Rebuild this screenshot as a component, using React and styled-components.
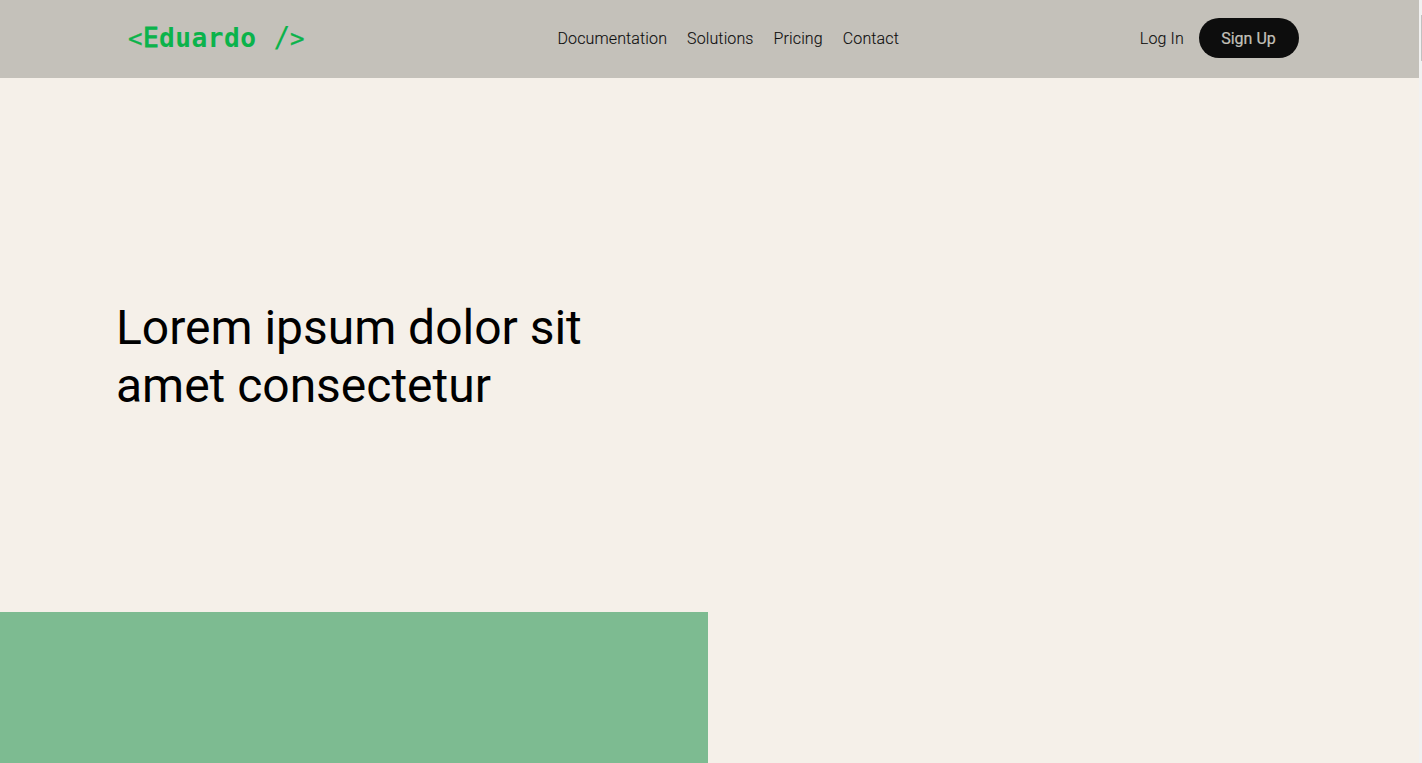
import React from "react";
import styled, { createGlobalStyle } from "styled-components";

const GlobalStyle = createGlobalStyle`
  * { box-sizing: border-box; }
  body { margin: 0; background: #f5f0e9; font-family: Roboto, sans-serif; overflow: hidden; }
  a { color: inherit; text-decoration: none; }
`;

const Shell = styled.div`
  display: grid;
  grid-template-columns: 1fr 3px;
  height: 100vh;
`;

const Page = styled.div`
  display: grid;
  grid-template-rows: 78px 534px 1fr;
  min-width: 0;
`;

const Header = styled.header`
  display: flex;
  justify-content: space-between;
  align-items: center;
  padding: 0 120px 2px 127px;
  background: #c4c1ba;
`;

const Logo = styled.a`
  display: flex;
  align-items: baseline;
  flex: 0 0 430.5px;
  color: #0bb34b;
  font: 400 26px/36px "DejaVu Sans Mono", monospace;
  letter-spacing: 0.45px;
  white-space: pre;
`;

const LogoBracket = styled.span`
  width: 16px;
  padding-left: 1px;
  font-size: 24px;
  -webkit-text-stroke: 0.3px #0bb34b;
`;

const LogoSlash = styled.span`
  margin-left: 17px;
  font-size: 28px;
  letter-spacing: -1.3px;
`;

const LogoInitial = styled.span`
  -webkit-text-stroke: 0.9px #0bb34b;
`;

const LogoName = styled.span`
  font-size: 26.2px;
  font-weight: 700;
`;

const Nav = styled.nav`
  display: flex;
  flex: 1;
  gap: 20px;
`;

const NavLink = styled.a`
  padding-top: 2px;
  color: #0d0d0d;
  font-size: 16px;
  font-weight: 300;
  line-height: 24px;
  letter-spacing: 0.12px;
  -webkit-text-stroke: 0.1px #0d0d0d;
`;

const Actions = styled.div`
  display: flex;
  align-items: center;
  gap: 15.2px;
`;

const SignUp = styled.button`
  width: 100px;
  height: 40px;
  padding: 2px 1px 0 0;
  border: 0;
  border-radius: 20px;
  background: #0d0d0d;
  color: #c4c1ba;
  font: 400 16px/24px Roboto, sans-serif;
  -webkit-text-stroke: 0.2px #c4c1ba;
`;

const Hero = styled.section`
  display: flex;
  align-items: center;
  padding: 24px 0 0 116px;
`;

const Title = styled.h1`
  width: 500px;
  margin: 0;
  color: #000;
  font-size: 48px;
  font-weight: 400;
  line-height: 58px;
  letter-spacing: -0.02px;
`;

const Feature = styled.section`
  width: 708px;
  background: #7dbb91;
`;

const Track = styled.aside`
  display: flex;
  justify-content: flex-end;
  padding-top: 15px;
  background: #f1f1f1;
`;

const Thumb = styled.div`
  width: 1px;
  height: 46px;
  background: #c1c1c1;
`;

const links = ["Documentation", "Solutions", "Pricing", "Contact"];

export default function App() {
  return (
    <Shell>
      <GlobalStyle />
      <Page>
        <Header>
          <Logo href="#">
            <LogoBracket>{"<"}</LogoBracket>
            <LogoInitial>E</LogoInitial>
            <LogoName>duardo</LogoName>
            <LogoSlash>/</LogoSlash>
            <LogoBracket>{">"}</LogoBracket>
          </Logo>
          <Nav>
            {links.map((label) => <NavLink key={label} href="#">{label}</NavLink>)}
          </Nav>
          <Actions>
            <NavLink href="#">Log In</NavLink>
            <SignUp>Sign Up</SignUp>
          </Actions>
        </Header>
        <Hero>
          <Title>Lorem ipsum dolor sit amet consectetur</Title>
        </Hero>
        <Feature />
      </Page>
      <Track><Thumb /></Track>
    </Shell>
  );
}
